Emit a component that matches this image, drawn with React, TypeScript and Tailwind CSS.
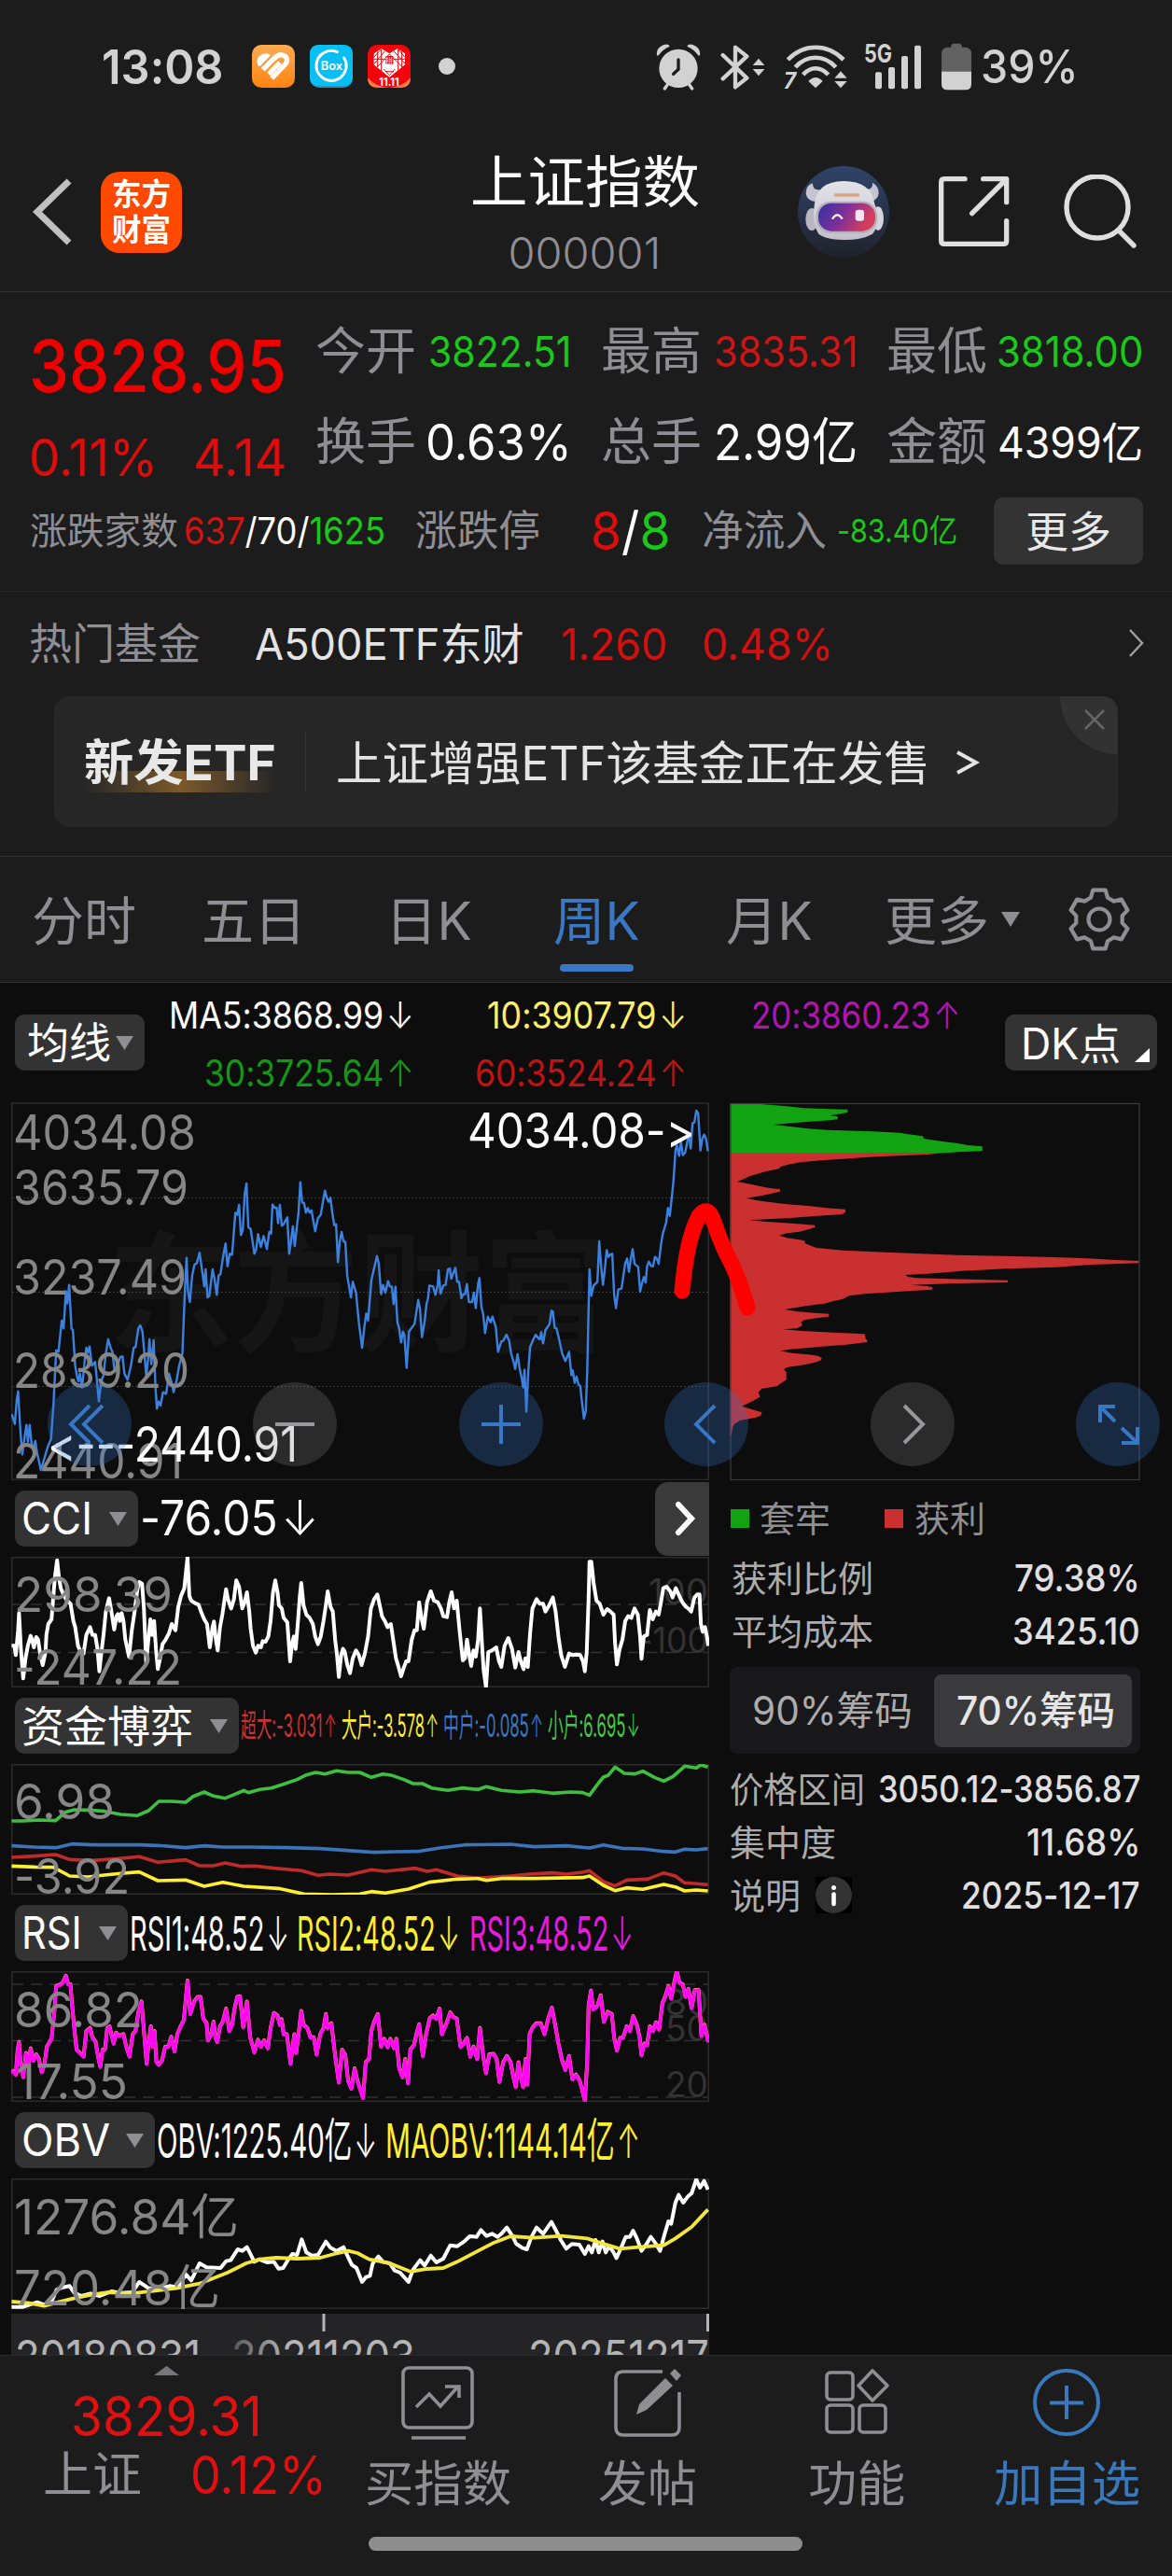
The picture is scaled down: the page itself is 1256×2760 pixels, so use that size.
import { useLayoutEffect, useRef, useState, type ReactNode } from "react";
import clsx from "clsx";

/* ---------- text that is squeezed or stretched to a given width ---------- */

interface FitProps {
  w: number;
  className?: string;
  children: ReactNode;
}

const Fit = ({ w, className, children }: FitProps) => {
  const ref = useRef<HTMLSpanElement>(null);
  const [scale, setScale] = useState(1);

  useLayoutEffect(() => {
    if (ref.current) setScale(w / ref.current.offsetWidth);
  }, [w]);

  return (
    <span className={clsx("flex shrink-0 leading-none whitespace-nowrap", className)} style={{ width: w }}>
      <span ref={ref} className="block shrink-0 origin-left" style={{ transform: `scaleX(${scale})` }}>
        {children}
      </span>
    </span>
  );
};

const Up = () => <span className="ml-[0.08em] font-light">↑</span>;
const Down = () => <span className="ml-[0.08em] font-light">↓</span>;

/* ---------- status bar ---------- */

const StatusBar = () => (
  <div className="flex h-[142px] items-center pl-[109px] text-[#d2d2d2]">
    <Fit w={131} className="text-[51px] font-semibold">13:08</Fit>
    <svg className="ml-[30px] h-[46px] w-[46px]" viewBox="0 0 138 138">
      <defs>
        <linearGradient id="orange" x1="0" y1="0" x2="0" y2="1">
          <stop offset="0" stopColor="#ffab52" />
          <stop offset="1" stopColor="#ff8412" />
        </linearGradient>
      </defs>
      <rect width="138" height="138" rx="30" fill="url(#orange)" />
      <path d="M19 66 Q10 36 36 29 Q52 26 60 33 L26 69 Z" fill="#fff" />
      <path d="M35 80 L74 41 Q92 25 108 38 Q118 50 106 64 L64 108 M54 94 L90 57" fill="none" stroke="#fff" strokeWidth="16" />
    </svg>
    <svg className="ml-4 h-[46px] w-[46px]" viewBox="0 0 138 138">
      <rect width="138" height="138" rx="30" fill="#2a8fbe" />
      <path d="M30 0H108Q138 0 138 30V108Q134 132 108 132H30Q4 132 0 108V30Q0 0 30 0Z" fill="#08bff4" />
      <path d="M88 23 A48 48 0 1 0 110 42" fill="none" stroke="#fff" strokeWidth="9" strokeLinecap="round" />
      <text x="35" y="80" textLength="70" lengthAdjust="spacingAndGlyphs" fontSize="38" fontWeight="600" fill="#fff">Box</text>
    </svg>
    <svg className="ml-4 h-[46px] w-[46px]" viewBox="0 0 138 138">
      <rect width="138" height="138" rx="30" fill="#f2040c" />
      <path d="M0 106 Q30 138 69 138 Q108 138 138 106 Q138 138 108 138 H30 Q0 138 0 106Z" fill="#ff7a45" />
      <path d="M70 104 L20 64 V28 L44 12 L70 28 L96 12 L120 28 V64 Z" fill="#fff" />
      <path
        d="M20 40 L44 14 M20 62 L56 20 M30 72 L70 30 M70 30 L112 72 M84 20 L120 60 M98 14 L120 40 M44 14 V84 M32 22 V72 M98 14 V82 M110 22 V72 M20 46 H56 M84 46 H120 M56 86 L84 86 M52 78 L70 98 L88 78"
        fill="none"
        stroke="#f2040c"
        strokeWidth="3"
      />
      <rect x="58" y="36" width="24" height="26" fill="#f2040c" />
      <text x="58" y="59" fontSize="24" fill="#fff">拼</text>
      <text x="37" y="131" textLength="64" lengthAdjust="spacingAndGlyphs" fontSize="34" fontWeight="700" fill="#fff">11.11</text>
    </svg>
    <span className="ml-[30px] h-[18px] w-[18px] rounded-full bg-[#d2d2d2]" />

    <svg className="ml-[215px] h-[51px] w-[48px]" viewBox="37 45 144 153" fill="#d2d2d2">
      <circle cx="109" cy="127" r="62" />
      <path d="M40 84Q36 62 62 51Q78 46 81 56Q58 66 46 84Q42 87 40 84Z" />
      <path d="M178 84Q182 62 156 51Q140 46 137 56Q160 66 172 84Q176 87 178 84Z" />
      <path d="M76 176L65 192M142 176L153 192" stroke="#d2d2d2" strokeWidth="10" strokeLinecap="round" />
      <path d="M109 99V130L93 145" fill="none" stroke="#1c1c1c" strokeWidth="10" strokeLinecap="round" />
    </svg>
    <svg className="ml-[21px] h-[51px] w-[49px]" viewBox="245 45 147 153" fill="#d2d2d2">
      <path d="M253 84L330 158L293 187V59L330 88L253 160" fill="none" stroke="#d2d2d2" strokeWidth="13" strokeLinecap="round" strokeLinejoin="round" />
      <path d="M368 95l19 22h-38zM349 129h38l-19 22z" />
    </svg>
    <svg className="ml-[18px] h-[51px] w-[70px]" viewBox="448 45 210 153" fill="#d2d2d2">
      <g fill="none" stroke="#d2d2d2" strokeWidth="14">
        <path d="M464 99C515 46 591 46 643 99" />
        <path d="M488 123C525 82 581 82 618 123" />
        <path d="M513 147C537 120 569 120 594 147" />
      </g>
      <path d="M530 168Q553 144 576 168L553 190z" />
      <text x="450" y="193" fontSize="72" fontWeight="700" fontStyle="italic" textLength="40" lengthAdjust="spacingAndGlyphs">7</text>
      <path d="M634 136l20 22h-40zM614 168h40l-20 22z" />
    </svg>
    <svg className="ml-[17px] h-[51px] w-[63px]" viewBox="708 45 189 153" fill="#d2d2d2">
      <text x="708" y="109" fontSize="80" fontWeight="700" textLength="90" lengthAdjust="spacingAndGlyphs">5G</text>
      <rect x="744" y="139" width="21" height="54" rx="6" />
      <rect x="786" y="123" width="21" height="70" rx="6" />
      <rect x="828" y="87" width="21" height="106" rx="6" />
      <rect x="870" y="53" width="21" height="140" rx="6" />
    </svg>
    <svg className="ml-[19px] h-[51px] w-[34px]" viewBox="954 43 102 153">
      <rect x="988" y="45" width="34" height="24" rx="9" fill="#626262" />
      <rect x="957" y="57" width="96" height="137" rx="20" fill="#626262" />
      <path d="M957 135H1053V174Q1053 194 1033 194H977Q957 194 957 174Z" fill="#d2d2d2" />
    </svg>
    <Fit w={105} className="ml-[9px] text-[50px] font-medium">39%</Fit>
  </div>
);

/* ---------- title bar ---------- */

const Robot = () => (
  <svg className="h-[98px] w-[98px]" viewBox="495 444 294 294">
    <defs>
      <linearGradient id="sky" x1="0" y1="0" x2="0" y2="1">
        <stop offset="0" stopColor="#304468" />
        <stop offset="1" stopColor="#1f222c" />
      </linearGradient>
      <linearGradient id="visor" x1="0" y1="0" x2="1" y2="0.3">
        <stop offset="0" stopColor="#2f32a4" />
        <stop offset="0.5" stopColor="#7c2f9a" />
        <stop offset="1" stopColor="#d63f5c" />
      </linearGradient>
      <linearGradient id="fur" x1="0" y1="0" x2="0" y2="1">
        <stop offset="0" stopColor="#e4e3ea" />
        <stop offset="1" stopColor="#c3bfca" />
      </linearGradient>
    </defs>
    <circle cx="642" cy="591" r="147" fill="url(#sky)" />
    <path d="M543 499Q521 505 521 532Q524 556 552 558L572 520Q541 524 543 499Z" fill="#c4c5d0" />
    <path d="M735 497Q755 508 755 532Q752 554 728 558L708 518Q738 522 735 497Z" fill="#c4c5d0" />
    <ellipse cx="540" cy="615" rx="20" ry="36" fill="#b9b7c2" />
    <ellipse cx="753" cy="612" rx="18" ry="38" fill="#d6d4dc" />
    <path d="M548 570Q556 492 642 492Q732 492 742 566Q768 622 735 662Q700 682 648 681Q588 682 562 662Q540 630 548 570Z" fill="url(#fur)" />
    <rect x="554" y="557" width="196" height="102" rx="46" fill="#b5b0be" />
    <rect x="561" y="563" width="183" height="90" rx="42" fill="url(#visor)" />
    <path d="M606 614Q622 588 638 614" fill="none" stroke="#fff" strokeWidth="7" />
    <rect x="680" y="584" width="28" height="36" rx="9" fill="#f1e6f2" />
    <path d="M616 537H688" stroke="#d7a585" strokeWidth="11" strokeLinecap="round" />
  </svg>
);

const TitleBar = () => (
  <div className="flex h-[171px] items-center border-b border-[#2f2f2f] pl-[34px]">
    <svg className="h-[72px] w-[44px]" viewBox="0 0 44 72" fill="none" stroke="#c0c0c0" strokeWidth="7">
      <path d="M40 3L6 36L40 69" />
    </svg>
    <div className="ml-[30px] flex h-[87px] w-[87px] flex-col items-center justify-center gap-[5px] rounded-[20px] bg-[#ff4800] text-white">
      <Fit w={63} className="text-[33px] font-bold">东方</Fit>
      <Fit w={63} className="text-[33px] font-bold">财富</Fit>
    </div>
    <div className="ml-[308px] flex w-[247px] flex-col items-center gap-[22px] pt-[4px]">
      <Fit w={246} className="text-[60px] text-white">上证指数</Fit>
      <Fit w={164} className="text-[47px] font-light text-[#8e8e93]">000001</Fit>
    </div>
    <div className="ml-[105px]">
      <Robot />
    </div>
    <svg className="ml-[53px] h-[76px] w-[76px]" viewBox="949 479 228 228" fill="none" stroke="#dedede" strokeWidth="16" strokeLinecap="round">
      <path d="M1033 487H967Q957 487 957 497V686Q957 696 967 696H1157Q1167 696 1167 686V622" />
      <path d="M1092 487H1167V562M1160 494L1056 598" strokeLinejoin="round" />
    </svg>
    <svg className="ml-[58px] h-[80px] w-[80px]" viewBox="0 0 80 80" fill="none" stroke="#dedede" strokeWidth="5.4" strokeLinecap="round">
      <circle cx="36" cy="35" r="33" />
      <path d="M59 60L75 76" />
    </svg>
  </div>
);

/* ---------- quote ---------- */

const quoteRows = [
  [
    { label: "今开", value: "3822.51", w: 154, cls: "text-[45px] text-[#19c819]" },
    { label: "最高", value: "3835.31", w: 154, cls: "text-[45px] text-[#cd1515]" },
    { label: "最低", value: "3818.00", w: 157, cls: "text-[45px] text-[#19c819]" },
  ],
  [
    { label: "换手", value: "0.63%", w: 157, cls: "text-[54px] text-white" },
    { label: "总手", value: "2.99亿", w: 154, cls: "text-[54px] text-white" },
    { label: "金额", value: "4399亿", w: 156, cls: "text-[46px] text-white" },
  ],
];

const Quote = () => (
  <div className="h-[321px] border-b border-[#262626]">
    <div className="flex h-[209px]">
      <div className="w-[338px] pt-[41px] pl-[31px]">
        <Fit w={276} className="text-[77px] font-medium text-[#ec0000]">3828.95</Fit>
        <div className="mt-[32px] flex justify-between pr-[30px] text-[#dc0d0d]">
          <Fit w={138} className="text-[55px]">0.11%</Fit>
          <Fit w={101} className="text-[55px]">4.14</Fit>
        </div>
      </div>
      <div className="flex flex-col pt-[15px]">
        {quoteRows.map((row, i) => (
          <div key={i} className="flex h-[97px] items-center gap-[31px]">
            {row.map((cell) => (
              <div key={cell.label} className="flex w-[275px] items-center justify-between">
                <Fit w={108} className="text-[54px] text-[#8e8e93]">{cell.label}</Fit>
                <Fit w={cell.w} className={cell.cls}>{cell.value}</Fit>
              </div>
            ))}
          </div>
        ))}
      </div>
    </div>
    <div className="flex h-[93px] items-center pl-[32px]">
      <Fit w={159} className="text-[40px] text-[#8e8e93]">涨跌家数</Fit>
      <Fit w={216} className="ml-[6px] text-[39px] text-white">
        <span className="text-[#cd1515]">637</span>/70/<span className="text-[#19c819]">1625</span>
      </Fit>
      <Fit w={134} className="ml-[32px] text-[45px] text-[#8e8e93]">涨跌停</Fit>
      <Fit w={86} className="ml-[54px] text-[56px] text-white">
        <span className="text-[#dc0d0d]">8</span>/<span className="text-[#19c819]">8</span>
      </Fit>
      <Fit w={134} className="ml-[33px] text-[45px] text-[#8e8e93]">净流入</Fit>
      <Fit w={129} className="ml-[11px] text-[34px] text-[#19c819]">-83.40亿</Fit>
      <button className="ml-[39px] flex h-[72px] w-[160px] items-center justify-center rounded-[10px] bg-[#333333]">
        <Fit w={92} className="text-[46px] text-[#e8e8e8]">更多</Fit>
      </button>
    </div>
  </div>
);

const HotFund = () => (
  <div className="h-[284px] border-b border-[#343434]">
    <div className="flex h-[110px] items-center pl-[31px]">
      <Fit w={184} className="text-[46px] text-[#8e8e93]">热门基金</Fit>
      <Fit w={289} className="ml-[58px] text-[47px] text-[#e4e4e4]">A500ETF东财</Fit>
      <Fit w={114} className="ml-[39px] text-[47px] text-[#d21010]">1.260</Fit>
      <Fit w={141} className="ml-[37px] text-[47px] text-[#d21010]">0.48%</Fit>
      <svg className="ml-[316px] h-[30px] w-[17px]" viewBox="0 0 17 30" fill="none" stroke="#a0a0a0" strokeWidth="2.4">
        <path d="M2 1L15 15L2 29" />
      </svg>
    </div>
    <div className="relative mt-[2px] ml-[58px] flex h-[140px] w-[1140px] items-center overflow-hidden rounded-[16px] bg-[#262626]">
      <div className="relative ml-[32px] flex h-[66px] items-center">
        <div className="absolute bottom-0 left-0 h-[23px] w-full bg-gradient-to-r from-[#262626] via-[#7d5a28] to-[#262626]" />
        <Fit w={206} className="relative top-[2px] text-[52px] font-bold text-[#e8e8e8]">新发ETF</Fit>
      </div>
      <div className="ml-[31px] h-[62px] w-px bg-[#353535]" />
      <Fit w={637} className="mt-[3px] ml-[32px] text-[50px] text-[#e4e4e4]">上证增强ETF该基金正在发售</Fit>
      <svg className="mt-[2px] ml-[27px] h-[26px] w-[26px]" viewBox="0 0 26 26" fill="none" stroke="#e4e4e4" strokeWidth="4">
        <path d="M2 2L22 13L2 24" />
      </svg>
      <div className="absolute top-0 right-0 flex h-[62px] w-[62px] items-center justify-center rounded-bl-full bg-[#323232] pb-[12px] pl-[12px]">
        <svg className="h-[22px] w-[22px]" viewBox="0 0 22 22" stroke="#666" strokeWidth="2.6">
          <path d="M1 1L21 21M21 1L1 21" />
        </svg>
      </div>
    </div>
  </div>
);

/* ---------- period tabs ---------- */

const tabs = [
  { name: "分时", w: 112, cls: "ml-[34px]" },
  { name: "五日", w: 112, cls: "ml-[70px]" },
  { name: "日K", w: 93, cls: "ml-[85px]" },
  { name: "周K", w: 93, cls: "ml-[87px]", active: true },
  { name: "月K", w: 93, cls: "ml-[92px]" },
  { name: "更多", w: 112, cls: "ml-[77px]" },
];

// Six-tooth outline around (36, 36)
const gearPoints = Array.from({ length: 6 }, (_, i) => i * 60 - 90)
  .flatMap((a) => [
    [a - 21, 25],
    [a - 12, 32],
    [a + 12, 32],
    [a + 21, 25],
  ])
  .map(([deg, r]) => {
    const t = (deg * Math.PI) / 180;
    return `${(36 + r * Math.cos(t)).toFixed(1)},${(36 + r * Math.sin(t)).toFixed(1)}`;
  })
  .join(" ");

const Tabs = () => (
  <div className="flex h-[135px] items-center border-b border-[#333333]">
    {tabs.map((t) => (
      <div key={t.name} className={clsx("relative flex h-full items-center pt-[4px]", t.cls)}>
        <Fit w={t.w} className={clsx("text-[56px]", t.active ? "text-[#3a78c3]" : "text-[#8e8e93]")}>
          {t.name}
        </Fit>
        {t.active && <span className="absolute bottom-[11px] left-[7px] h-[8px] w-[79px] rounded-full bg-[#3a78c3]" />}
      </div>
    ))}
    <svg className="ml-[13px] h-[16px] w-[20px]" viewBox="0 0 20 16" fill="#8e8e93">
      <path d="M0 0H20L10 16Z" />
    </svg>
    <svg className="ml-[49px] h-[72px] w-[72px]" viewBox="0 0 72 72" fill="none" stroke="#8e8e93" strokeWidth="4.2" strokeLinejoin="round">
      <polygon points={gearPoints} />
      <circle cx="36" cy="36" r="11.5" />
    </svg>
  </div>
);

/* ---------- moving averages ---------- */

const Caret = ({ className }: { className?: string }) => (
  <svg className={clsx("h-[15px] w-[19px] shrink-0", className)} viewBox="0 0 19 15" fill="#8e8e93">
    <path d="M0 0H19L9.5 15Z" />
  </svg>
);

const Averages = () => (
  <div className="flex h-[128px]">
    <button className="mt-[34px] ml-[16px] flex h-[60px] w-[139px] items-center rounded-[10px] bg-[#333333] pl-[13px]">
      <Fit w={90} className="text-[45px] text-white">均线</Fit>
      <Caret className="ml-[5px]" />
    </button>
    <div className="flex w-[922px] flex-col pt-[3px] text-[39px]">
      <div className="flex h-[62px] items-center">
        <Fit w={263} className="ml-[26px] text-white">MA5:3868.99<Down /></Fit>
        <Fit w={214} className="ml-[78px] text-[#fff06b]">10:3907.79<Down /></Fit>
        <Fit w={224} className="ml-[69px] text-[#b114b1]">20:3860.23<Up /></Fit>
      </div>
      <div className="flex h-[62px] items-center">
        <Fit w={225} className="ml-[64px] text-[#159615]">30:3725.64<Up /></Fit>
        <Fit w={227} className="ml-[65px] text-[#c01414]">60:3524.24<Up /></Fit>
      </div>
    </div>
    <button className="mt-[34px] flex h-[60px] w-[163px] items-end rounded-[10px] bg-[#333333]">
      <Fit w={107} className="mb-[6px] ml-[17px] text-[46px] text-white">DK点</Fit>
      <svg className="mb-[9px] ml-[15px] h-[15px] w-[16px]" viewBox="0 0 16 15" fill="#fff">
        <path d="M16 0V15H0Z" />
      </svg>
    </button>
  </div>
);

/* ---------- charts ---------- */

const PRICE =
  "25,1035 32,1067 36,990 39,962 44,1090 48,1165 52,1120 57,1070 60,1125 64,1070 68,1130 72,1150 76,1122 80,1160 88,1215 94,1185 103,1140 110,1115 115,1010 121,830 126,835 133,735 137,760 142,640 145,680 149,620 154,760 157,765 162,880 166,915 169,930 172,905 177,950 182,870 186,822 189,838 193,818 198,880 205,868 209,930 213,995 218,930 223,910 228,840 233,795 238,820 242,835 247,900 253,880 259,852 264,850 268,905 275,925 282,880 288,822 292,820 298,760 302,750 307,770 311,840 315,912 319,860 322,795 326,875 331,798 335,950 338,1018 342,995 346,1008 351,965 358,970 364,905 369,930 374,965 380,930 386,880 393,840 398,650 402,533 405,640 409,675 414,590 419,555 424,550 430,517 436,580 440,625 443,570 447,660 451,655 458,570 462,600 467,652 471,590 475,585 480,535 486,487 490,560 495,520 500,523 507,388 511,395 515,363 519,460 523,445 527,330 531,294 535,435 540,440 548,520 552,505 556,457 562,498 568,463 575,505 580,450 584,455 587,362 592,372 596,372 599,422 603,363 607,430 611,425 619,403 623,520 627,480 631,432 635,495 639,440 643,390 647,290 651,355 655,357 659,388 663,373 667,388 671,380 679,448 685,405 691,395 696,350 700,317 704,340 708,353 712,340 716,390 720,428 724,425 728,547 732,480 736,450 740,480 744,482 748,590 756,660 760,610 767,645 773,740 780,822 785,755 789,712 793,735 800,605 807,560 812,528 816,550 821,650 825,620 830,645 836,608 840,625 844,625 848,682 852,626 856,740 860,760 864,805 868,770 871,780 876,887 881,770 886,760 893,745 901,668 905,700 909,788 915,735 919,680 922,665 925,622 933,625 938,652 943,620 945,573 949,648 955,622 960,620 965,570 969,567 972,600 981,565 985,610 989,610 994,663 998,650 1002,650 1006,617 1010,675 1017,675 1021,645 1025,695 1030,615 1033,598 1037,690 1041,715 1045,775 1051,722 1057,740 1061,722 1068,755 1073,835 1080,802 1084,800 1091,780 1097,800 1101,840 1106,865 1110,890 1115,843 1119,885 1124,920 1127,950 1130,893 1134,1028 1138,900 1142,820 1149,795 1154,780 1160,792 1163,795 1166,772 1170,808 1175,765 1180,755 1184,745 1188,703 1191,705 1195,758 1199,760 1206,805 1211,840 1218,865 1226,835 1231,910 1234,895 1238,935 1242,915 1246,940 1250,945 1254,1000 1258,1050 1262,1025 1265,900 1268,700 1270,570 1274,655 1279,622 1287,610 1291,480 1295,560 1299,620 1303,570 1307,508 1311,530 1315,522 1319,520 1323,650 1327,695 1332,635 1339,632 1343,590 1347,550 1351,535 1355,578 1359,535 1363,505 1367,552 1371,558 1375,562 1379,642 1383,615 1387,595 1391,612 1394,560 1398,545 1403,560 1407,560 1411,530 1415,535 1419,552 1424,490 1428,455 1435,420 1439,373 1443,398 1450,300 1453,240 1455,190 1458,170 1463,205 1467,160 1471,203 1476,195 1480,165 1484,135 1488,182 1492,100 1496,98 1500,60 1504,68 1509,188 1513,150 1517,137 1521,150 1525,190";

const CCI =
  "25,550 31,550 34,580 39,500 41,445 45,560 50,655 55,590 60,550 66,518 69,530 73,555 78,522 82,530 87,580 92,612 98,570 100,515 104,480 111,465 116,370 119,320 123,275 127,330 131,365 138,390 145,405 152,415 158,470 162,490 168,550 174,570 180,575 186,515 194,490 199,515 205,515 210,560 214,632 219,565 223,515 228,440 235,397 240,440 246,498 251,455 254,448 258,470 262,445 266,470 270,530 278,585 284,500 290,440 296,370 300,345 306,350 310,430 315,605 319,540 324,465 328,515 332,470 336,560 340,625 345,590 350,545 357,530 364,510 370,480 378,500 384,425 390,390 397,365 404,265 408,390 412,405 420,413 428,418 433,440 440,465 446,480 452,555 458,490 461,472 465,530 469,565 474,490 479,450 487,368 491,400 498,430 504,400 509,340 515,360 522,430 527,410 532,378 537,440 540,495 545,550 551,572 556,550 562,555 566,535 572,537 578,520 583,470 588,380 593,340 598,380 601,420 607,430 611,460 619,475 625,600 629,545 633,520 637,560 642,470 646,390 649,348 654,420 660,450 667,460 674,480 679,520 685,545 691,520 697,470 702,420 706,375 712,425 717,440 722,530 726,580 730,650 735,580 739,560 743,570 748,610 754,638 760,590 767,565 773,580 779,612 786,575 793,520 799,430 806,400 813,385 818,420 823,455 829,470 835,490 842,480 849,550 853,590 859,620 864,648 870,620 875,600 880,600 887,530 893,500 898,500 903,410 908,460 913,495 920,410 928,375 935,405 943,410 950,430 955,455 963,458 968,410 973,378 978,430 984,405 990,500 997,597 1002,590 1006,530 1011,580 1015,615 1020,565 1025,585 1030,530 1034,430 1039,560 1042,630 1047,683 1052,570 1060,565 1069,555 1075,600 1080,618 1087,550 1095,525 1103,560 1110,620 1117,570 1122,600 1128,625 1132,590 1137,618 1142,510 1147,430 1156,400 1163,415 1170,415 1175,440 1183,420 1191,395 1197,440 1203,520 1209,580 1217,618 1226,575 1234,580 1243,578 1250,580 1256,600 1260,632 1264,570 1268,400 1270,280 1274,280 1279,350 1285,405 1292,415 1300,450 1308,432 1315,440 1322,450 1325,540 1329,610 1335,560 1341,530 1347,470 1353,455 1360,460 1367,430 1374,450 1379,520 1382,592 1387,520 1394,515 1400,435 1406,465 1413,440 1419,450 1424,410 1429,365 1436,360 1444,375 1449,395 1456,365 1462,385 1470,410 1478,425 1483,430 1489,440 1496,395 1502,385 1507,385 1510,480 1514,505 1519,490 1523,520 1526,550";

const FLOW_SMALL =
  "25,1113 50,1113 85,1110 120,1112 140,1085 160,1077 190,1078 225,1082 260,1092 295,1096 320,1080 342,1050 370,1050 400,1053 415,1035 440,1020 460,1033 485,1040 505,1028 525,1015 535,1022 560,1012 585,1007 610,995 640,980 660,965 680,957 700,962 725,952 750,957 775,957 800,973 825,962 845,967 870,980 890,993 910,993 930,1007 965,1015 995,1007 1030,1012 1048,1003 1080,1015 1120,1020 1150,1016 1190,1024 1230,1020 1255,1022 1270,1030 1290,990 1300,972 1310,967 1325,940 1345,960 1368,962 1385,953 1410,973 1430,985 1450,970 1475,937 1500,943 1510,933 1525,940";
const FLOW_MID =
  "25,1193 75,1197 120,1199 155,1187 200,1190 300,1190 340,1192 400,1199 440,1193 480,1197 540,1197 620,1199 690,1202 740,1207 805,1214 850,1212 900,1211 950,1199 1000,1190 1100,1188 1150,1196 1220,1193 1270,1200 1300,1190 1340,1201 1385,1203 1430,1211 1455,1213 1475,1204 1500,1206 1525,1202";
const FLOW_HUGE =
  "25,1230 75,1226 120,1221 150,1237 200,1240 250,1235 300,1228 340,1246 400,1238 430,1257 460,1257 485,1248 520,1259 550,1258 590,1265 650,1273 685,1288 710,1284 750,1287 800,1270 830,1275 895,1265 920,1275 940,1270 985,1290 1030,1297 1100,1290 1140,1284 1190,1280 1220,1284 1255,1278 1270,1273 1300,1308 1325,1322 1350,1303 1395,1300 1430,1280 1455,1290 1475,1312 1500,1315 1525,1318";
const FLOW_BIG =
  "25,1258 75,1261 115,1262 150,1290 190,1293 220,1288 260,1282 300,1277 340,1305 400,1303 440,1323 480,1310 525,1323 600,1330 655,1348 715,1350 775,1348 800,1340 830,1345 880,1332 925,1310 985,1300 1030,1298 1048,1304 1080,1298 1150,1298 1255,1295 1270,1290 1300,1320 1325,1337 1350,1328 1385,1333 1430,1317 1455,1325 1475,1338 1500,1335 1525,1338";

const RSI =
  "25,565 34,580 38,500 41,475 44,540 50,588 56,510 62,540 66,495 72,535 78,515 84,530 90,572 96,545 101,490 111,465 117,380 121,295 128,292 135,285 142,262 147,290 152,290 155,350 160,430 165,500 172,510 180,522 186,440 194,430 199,460 206,475 211,520 216,555 221,500 226,500 231,430 236,425 240,450 245,480 250,445 256,455 266,450 272,490 279,522 286,450 292,440 298,380 305,345 309,420 316,545 320,480 325,425 329,490 333,440 337,540 342,548 349,535 356,490 363,490 369,458 376,505 382,450 389,425 396,405 400,340 404,278 410,385 418,345 426,330 432,330 438,400 445,415 448,470 454,455 460,410 464,460 468,475 474,425 480,410 487,368 494,440 500,420 505,370 511,330 517,328 524,428 532,345 539,460 548,508 556,468 562,490 569,470 577,495 583,430 590,382 598,390 603,420 607,402 611,450 618,450 626,545 634,450 638,510 644,440 649,375 654,420 662,430 669,460 676,460 682,515 690,450 697,430 702,385 706,430 714,415 722,520 730,605 737,500 744,518 750,600 757,625 764,560 770,600 782,655 788,540 795,530 800,440 806,410 814,385 821,490 828,465 835,492 841,465 849,495 854,465 860,560 867,588 873,530 879,608 884,500 892,485 897,450 903,418 911,520 918,450 926,398 933,390 940,400 947,368 952,450 962,415 970,380 977,395 984,400 992,490 999,480 1006,462 1013,522 1020,490 1028,530 1034,430 1041,520 1047,575 1054,515 1063,513 1070,530 1076,603 1084,540 1092,520 1100,540 1105,580 1111,620 1117,540 1122,590 1127,620 1132,530 1136,612 1141,450 1147,430 1155,415 1165,415 1173,450 1181,400 1189,365 1196,420 1203,480 1211,535 1218,565 1226,520 1233,595 1241,580 1249,600 1256,640 1260,663 1265,540 1268,360 1273,310 1278,370 1287,360 1294,325 1301,410 1309,378 1318,385 1323,460 1329,502 1336,462 1342,462 1350,425 1357,440 1364,392 1372,420 1378,460 1382,518 1388,480 1394,485 1400,425 1407,440 1413,412 1420,435 1427,350 1433,330 1440,295 1446,335 1453,280 1458,248 1464,285 1471,290 1477,330 1483,305 1490,365 1497,308 1505,308 1511,455 1518,420 1526,475";

const OBV =
  "25,1325 50,1325 80,1310 95,1318 112,1305 122,1270 135,1262 150,1258 160,1280 175,1290 195,1282 215,1290 240,1275 260,1280 285,1278 300,1245 320,1265 345,1265 365,1258 385,1262 400,1220 412,1240 430,1185 445,1198 475,1200 487,1178 497,1175 512,1140 522,1145 532,1133 548,1180 558,1172 575,1182 590,1180 600,1202 610,1200 620,1175 630,1155 640,1158 650,1108 660,1150 672,1160 685,1158 702,1115 712,1135 725,1145 740,1133 750,1165 758,1190 768,1200 780,1245 788,1230 797,1225 803,1185 815,1163 825,1180 840,1185 850,1208 862,1215 880,1245 890,1205 905,1175 915,1192 928,1160 940,1182 955,1170 970,1127 985,1130 1000,1115 1012,1098 1027,1100 1036,1078 1048,1097 1060,1090 1072,1100 1080,1090 1092,1070 1105,1100 1112,1122 1125,1135 1135,1140 1145,1100 1156,1070 1170,1090 1188,1052 1198,1080 1208,1110 1220,1138 1232,1123 1248,1125 1260,1155 1268,1130 1275,1150 1283,1110 1290,1150 1298,1115 1305,1150 1312,1130 1320,1145 1328,1168 1338,1135 1348,1100 1357,1100 1364,1080 1372,1105 1382,1145 1392,1125 1402,1100 1412,1120 1422,1145 1432,1090 1440,1050 1446,1058 1455,990 1462,965 1472,990 1482,970 1490,960 1500,915 1508,942 1517,920 1525,948";
const MAOBV =
  "25,1308 60,1312 95,1322 125,1310 160,1297 200,1285 235,1278 280,1282 330,1274 380,1265 430,1250 490,1215 530,1185 560,1172 595,1167 640,1170 690,1167 720,1155 750,1145 770,1152 795,1172 840,1185 885,1212 920,1203 955,1200 985,1180 1030,1145 1065,1118 1100,1098 1150,1103 1210,1097 1265,1105 1300,1122 1335,1138 1375,1133 1430,1127 1455,1105 1490,1068 1525,1012";

const CHIPS_ABOVE =
  "67,37 140,37 195,41 250,46 305,52 385,55 445,56 445,66 410,72 388,76 413,79 413,87 390,91 320,95 250,101 207,105 240,109 320,118 380,122 530,127 615,131 635,135 687,142 690,150 735,157 800,165 830,171 878,175 878,190 815,192 755,196 67,196";
const CHIPS_BELOW =
  "67,195 755,195 705,201 555,207 490,211 430,215 370,219 300,225 260,232 230,240 225,246 180,256 130,271 105,282 90,288 110,292 160,302 190,308 228,313 228,320 195,328 165,334 120,341 150,348 200,355 250,361 320,366 375,373 438,377 438,386 428,393 340,399 270,404 200,408 127,412 175,416 230,420 285,424 340,428 340,435 310,444 290,449 250,454 225,461 250,469 290,475 307,478 308,487 345,501 430,509 515,513 605,517 718,521 795,524 980,528 1110,531 1215,535 1290,539 1382,543 1382,550 1230,555 1155,560 1115,563 955,568 870,572 810,575 762,580 700,584 630,588 640,594 665,598 835,602 960,605 960,612 800,615 650,620 700,624 718,628 718,635 640,640 560,645 500,649 450,655 430,665 400,672 370,680 310,688 242,699 280,705 320,709 385,713 385,722 345,727 305,733 295,740 298,745 298,752 280,760 238,763 300,768 400,773 500,778 503,793 508,797 508,804 440,812 380,817 320,822 260,827 228,832 265,839 320,844 350,848 362,855 360,862 345,868 310,876 250,885 240,892 248,900 248,925 232,935 218,946 170,953 158,965 164,980 140,993 105,1010 145,1022 170,1030 165,1040 150,1046 100,1055 80,1068 75,1080 72,1100 67,1110";

interface SeriesProps {
  points: string;
  color: string;
  dy: number;
  width?: number;
}

const Series = ({ points, color, dy, width = 2.5 }: SeriesProps) => (
  <g transform={`translate(-12 ${-dy}) scale(.49745 .33333)`}>
    <polyline points={points} fill="none" stroke={color} strokeWidth={width} strokeLinejoin="round" vectorEffect="non-scaling-stroke" />
  </g>
);

interface LabelProps {
  x: number;
  y: number;
  w: number;
  size?: number;
  fill?: string;
  children: string;
}

// y is the middle of the digits
const Label = ({ x, y, w, size = 52, fill = "#868686", children }: LabelProps) => (
  <text x={x} y={y + size * 0.364} fontSize={size} fill={fill} textLength={w} lengthAdjust="spacingAndGlyphs">
    {children}
  </text>
);

const Dash = ({ y }: { y: number }) => (
  <path d={`M1 ${y}H747`} stroke="#303030" strokeWidth="1.6" strokeDasharray="12 8" />
);

const PriceChart = () => (
  <svg className="block h-[405px] w-[748px]" viewBox="0 0 748 405">
    <rect x="0.75" y="1" width="746.5" height="403.5" fill="none" stroke="#2a2a2a" strokeWidth="1.6" />
    <text x="104" y="256" fontSize="140" fontWeight="700" fill="#151515" textLength="536" lengthAdjust="spacingAndGlyphs">东方财富</text>
    <path d="M1 102.5H747M1 203.5H747M1 304.5H747" stroke="#3a3a3a" strokeWidth="1.2" strokeDasharray="2 2" />
    <Series points={PRICE} color="#3b82e0" dy={11} width={2.4} />
    <Label x={2} y={32} w={196}>4034.08</Label>
    <Label x={2} y={91} w={188}>3635.79</Label>
    <Label x={2} y={187} w={186}>3237.49</Label>
    <Label x={2} y={287} w={189}>2839.20</Label>
    <Label x={2} y={384} w={182}>2440.91</Label>
    <Label x={489} y={30} w={244} fill="#fff">4034.08-&gt;</Label>
    <Label x={39} y={366} w={268} fill="#fff">&lt;---2440.91</Label>
  </svg>
);

const Frame = ({ children }: { children: ReactNode }) => (
  <svg className="block h-[140px] w-[748px]" viewBox="0 0 748 140">
    <rect x="0.75" y="0.75" width="746.5" height="138.5" fill="none" stroke="#2a2a2a" strokeWidth="1.6" />
    {children}
  </svg>
);

interface PickerProps {
  name: string;
  w: number;
  className: string;
  size?: string;
}

const Picker = ({ name, w, className, size = "text-[48px]" }: PickerProps) => (
  <button className={clsx("ml-[4px] flex h-[60px] shrink-0 items-center justify-between rounded-[10px] bg-[#333333] pr-[12px] pl-[7px]", className)}>
    <Fit w={w} className={clsx(size, "text-white")}>{name}</Fit>
    <Caret />
  </button>
);

const Indicators = () => (
  <div className="w-[748px]">
    <div className="flex h-[82px] items-center">
      <Picker name="CCI" w={76} className="w-[132px]" />
      <Fit w={191} className="ml-[2px] text-[52px] text-white">-76.05<Down /></Fit>
      <button className="ml-auto flex h-[79px] w-[58px] items-center justify-center rounded-l-[14px] bg-[#3a3a3a] pl-[7px]">
        <svg className="h-[38px] w-[24px]" viewBox="0 0 24 38" fill="none" stroke="#fff" strokeWidth="6" strokeLinecap="round">
          <path d="M4 4L18 19L4 34" />
        </svg>
      </button>
    </div>
    <Frame>
      <Dash y={51} />
      <Dash y={102.5} />
      <Label x={683} y={37} w={64} size={38} fill="#333">100</Label>
      <Label x={671} y={89} w={76} size={38} fill="#333">-100</Label>
      <Series points={CCI} color="#ffffff" dy={88} width={4} />
      <Label x={3} y={40} w={170}>298.39</Label>
      <Label x={3} y={118} w={180}>-247.22</Label>
    </Frame>

    <div className="flex h-[82px] items-center">
      <Picker name="资金博弈" w={184} className="w-[240px]" size="text-[46px]" />
      <div className="flex text-[34px]">
        <Fit w={103} className="ml-[2px] text-[#c83232]">超大:-3.031<Up /></Fit>
        <Fit w={104} className="ml-[5px] text-[#ffee32]">大户:-3.578<Up /></Fit>
        <Fit w={107} className="ml-[5px] text-[#3f78c0]">中户:-0.085<Up /></Fit>
        <Fit w={99} className="ml-[5px] text-[#46c846]">小户:6.695<Down /></Fit>
      </div>
    </div>
    <Frame>
      <Series points={FLOW_SMALL} color="#3fbf3f" dy={310} width={3.6} />
      <Series points={FLOW_MID} color="#3b74b8" dy={310} width={3.6} />
      <Series points={FLOW_HUGE} color="#c02a2a" dy={310} width={3.6} />
      <Series points={FLOW_BIG} color="#ffee32" dy={310} width={3.6} />
      <Label x={3} y={40} w={108}>6.98</Label>
      <Label x={3} y={120} w={124}>-3.92</Label>
    </Frame>

    <div className="flex h-[82px] items-center">
      <Picker name="RSI" w={65} className="w-[121px]" />
      <div className="flex text-[51px]">
        <Fit w={171} className="ml-[2px] text-white">RSI1:48.52<Down /></Fit>
        <Fit w={175} className="ml-[8px] text-[#ffee32]">RSI2:48.52<Down /></Fit>
        <Fit w={176} className="ml-[10px] text-[#e81ae0]">RSI3:48.52<Down /></Fit>
      </div>
    </div>
    <Frame>
      <Dash y={14} />
      <Dash y={74.5} />
      <Dash y={135} />
      <Label x={701} y={33.5} w={46} size={38} fill="#333">80</Label>
      <Label x={701} y={60.7} w={46} size={38} fill="#333">50</Label>
      <Label x={701} y={121.6} w={46} size={38} fill="#333">20</Label>
      <Series points={RSI} color="#ff9a6a" dy={82.6} width={4} />
      <Series points={RSI} color="#ff0af0" dy={82} width={3.6} />
      <Label x={3} y={41} w={138}>86.82</Label>
      <Label x={5} y={118} w={120}>17.55</Label>
    </Frame>

    <div className="flex h-[82px] items-center">
      <Picker name="OBV" w={95} className="w-[150px]" />
      <div className="flex text-[51px]">
        <Fit w={236} className="ml-[2px] text-white">OBV:1225.40亿<Down /></Fit>
        <Fit w={273} className="ml-[9px] text-[#ffee32]">MAOBV:1144.14亿<Up /></Fit>
      </div>
    </div>
    <Frame>
      <Series points={OBV} color="#ffffff" dy={304} width={4} />
      <Series points={MAOBV} color="#f5e63c" dy={304} width={3.8} />
      <Label x={3} y={41} w={241}>1276.84亿</Label>
      <Label x={3} y={117} w={221}>720.48亿</Label>
    </Frame>
    <svg className="mt-[5px] block h-[44px] w-[748px]" viewBox="0 0 748 44">
      <defs>
        <linearGradient id="fade">
          <stop offset="0" stopColor="#555" />
          <stop offset="0.3" stopColor="#b4b4b4" />
        </linearGradient>
      </defs>
      <rect width="748" height="44" fill="#242426" />
      <path d="M335 0V19M746.5 0V19" stroke="#b4b4b4" strokeWidth="3" />
      <Label x={4} y={46} w={199} size={48} fill="#b4b4b4">20180831</Label>
      <Label x={236} y={46} w={197} size={48} fill="url(#fade)">20211203</Label>
      <Label x={554} y={46} w={194} size={48} fill="#b4b4b4">20251217</Label>
    </svg>
  </div>
);

/* ---------- chip distribution ---------- */

interface ChipRowProps {
  label: ReactNode;
  value: string;
  w: number;
}

const ChipRow = ({ label, value, w }: ChipRowProps) => (
  <div className="flex h-[57px] items-center justify-between">
    {label}
    <Fit w={w} className="text-[40px] font-medium text-[#e0e0e0]">{value}</Fit>
  </div>
);

const ChipPanel = () => (
  <div className="ml-[22px] w-[440px]">
    <svg className="block h-[405px] w-[440px]" viewBox="0 0 440 405">
      <g transform="translate(-22 -11) scale(.33333)">
        <polygon points={CHIPS_ABOVE} fill="#12a312" />
        <polygon points={CHIPS_BELOW} fill="#cb3030" />
      </g>
      <rect x="1" y="1.5" width="438" height="403" fill="none" stroke="#3c3c3c" strokeWidth="1.2" />
    </svg>
    <div className="flex h-[82px] items-center pl-px">
      <span className="h-[20px] w-[20px] bg-[#12a312]" />
      <Fit w={76} className="ml-[11px] text-[38px] text-[#8e8e93]">套牢</Fit>
      <span className="ml-[58px] h-[20px] w-[20px] bg-[#cb3030]" />
      <Fit w={76} className="ml-[12px] text-[38px] text-[#8e8e93]">获利</Fit>
    </div>
    <div className="-mt-[6px] text-[38px] text-[#acacac]">
      <ChipRow label={<Fit w={152} className="pl-[2px]">获利比例</Fit>} value="79.38%" w={135} />
      <ChipRow label={<Fit w={152} className="pl-[2px]">平均成本</Fit>} value="3425.10" w={137} />
      <div className="mt-[10px] mb-[9px] flex h-[93px] items-center rounded-[8px] bg-[#18181a] pl-[24px]">
        <Fit w={172} className="text-[42px]">90%筹码</Fit>
        <div className="ml-[23px] flex h-[78px] w-[212px] items-center rounded-[8px] bg-[#3a3a3c] pl-[24px]">
          <Fit w={170} className="text-[42px] font-medium text-[#e6e6e6]">70%筹码</Fit>
        </div>
      </div>
      <ChipRow label={<Fit w={145}>价格区间</Fit>} value="3050.12-3856.87" w={281} />
      <ChipRow label={<Fit w={114}>集中度</Fit>} value="11.68%" w={122} />
      <ChipRow
        label={
          <div className="flex flex-1 items-center">
            <Fit w={76}>说明</Fit>
            <span className="ml-[16px] h-[39px] w-[39px] bg-black">
              <svg viewBox="0 0 39 39">
                <circle cx="19.5" cy="19.5" r="19.5" fill="#333" />
                <circle cx="19.5" cy="11.5" r="2.5" fill="#fff" />
                <path d="M19.5 18.5V29" stroke="#fff" strokeWidth="4.6" strokeLinecap="round" />
              </svg>
            </span>
          </div>
        }
        value="2025-12-17"
        w={192}
      />
    </div>
  </div>
);

/* ---------- round buttons and the marker over the chart ---------- */

const roundButtons = [
  { d: "M45 25L25 45L45 65M59 25L39 45L59 65", blue: true },
  { d: "M24 45H66", blue: false },
  { d: "M24 45H66M45 24V66", blue: true },
  { d: "M54 25L34 45L54 65", blue: true },
  { d: "M36 25L56 45L36 65", blue: false },
  { d: "M42 26H26V43M26 26L42 42M49 65H66V48M66 65L49 49", blue: true },
];

const ChartControls = () => (
  <div className="absolute top-[428px] left-[51px] flex w-[1192px] justify-between">
    {roundButtons.map(({ d, blue }) => (
      <button key={d} className={clsx("h-[90px] w-[90px] rounded-full", blue ? "bg-[#3475ca]/28" : "bg-[#828285]/26")}>
        <svg viewBox="0 0 90 90" fill="none" stroke={blue ? "#3777c3" : "#98989c"} strokeWidth="4">
          <path d={d} />
        </svg>
      </button>
    ))}
  </div>
);

const Marker = () => (
  <svg className="absolute top-[225px] left-[715px] h-[150px] w-[110px]" viewBox="715 1278 110 150" fill="none" stroke="#ff0000" strokeWidth="17" strokeLinecap="round" strokeLinejoin="round">
    <path d="M731 1383C734 1352 738 1324 749 1303Q757 1292 763 1304C769 1318 770 1328 782 1350C791 1367 796 1384 801 1401" />
  </svg>
);

/* ---------- bottom bar ---------- */

const actions = [
  {
    name: "买指数",
    w: 157,
    icon: (
      <>
        <rect x="3" y="2" width="74" height="64" rx="6" />
        <path d="M12 77H70M17 44L31 30L43 43L61 23M48 22H63V34" />
      </>
    ),
  },
  {
    name: "发帖",
    w: 106,
    icon: (
      <>
        <path d="M56 6H14Q6 6 6 14V66Q6 74 14 74H66Q74 74 74 66V28" />
        <path d="M28 52L31 41L59 13L67 21L39 47Z" fill="#8e8e93" stroke="none" />
        <path d="M64 8L69 3L76 10L71 16Z" fill="#8e8e93" stroke="none" />
      </>
    ),
  },
  {
    name: "功能",
    w: 104,
    icon: (
      <>
        <rect x="8" y="7" width="28" height="29" rx="4" />
        <rect x="8" y="42" width="28" height="29" rx="4" />
        <rect x="43" y="42" width="28" height="29" rx="4" />
        <path d="M57 5L73 21L57 37L42 21Z" strokeLinejoin="round" />
      </>
    ),
  },
];

const BottomBar = () => (
  <div className="h-[237px] border-t border-[#2a2a2a] bg-[#1c1c1c]">
    <div className="flex h-[194px]">
      <div className="flex w-[357px] flex-col items-center pt-[11px]">
        <svg className="h-[10px] w-[27px]" viewBox="0 0 27 10" fill="#77777b">
          <path d="M13.5 0L27 10H0Z" />
        </svg>
        <Fit w={205} className="mt-[14px] text-[59px] text-[#e01010]">3829.31</Fit>
        <div className="mt-[6px] flex w-full items-center justify-between pr-[7px] pl-[46px]">
          <Fit w={106} className="text-[52px] text-[#8e8e93]">上证</Fit>
          <Fit w={146} className="text-[56px] text-[#e01010]">0.12%</Fit>
        </div>
      </div>
      {actions.map((a) => (
        <div key={a.name} className="flex w-[224.5px] flex-col items-center pt-[11px]">
          <svg className="h-[80px] w-[80px]" viewBox="0 0 80 80" fill="none" stroke="#8e8e93" strokeWidth="3.6">
            {a.icon}
          </svg>
          <Fit w={a.w} className="mt-[21px] text-[52px] text-[#8e8e93]">{a.name}</Fit>
        </div>
      ))}
      <div className="flex w-[225px] flex-col items-center pt-[11px]">
        <svg className="h-[80px] w-[80px]" viewBox="0 0 80 80" fill="none" stroke="#3a78bd" strokeWidth="4">
          <circle cx="40" cy="39" r="34" />
          <path d="M22 39.500H58M40 21V57" />
        </svg>
        <Fit w={157} className="mt-[21px] text-[52px] text-[#3a78bd]">加自选</Fit>
      </div>
    </div>
    <div className="ml-[395px] h-[15px] w-[465px] rounded-full bg-[#8e8e8e]" />
  </div>
);

export default function App() {
  return (
    <div className="flex h-[2760px] w-[1256px] flex-col overflow-hidden bg-[#1c1c1c] font-['Inter','Noto_Sans_CJK_SC',sans-serif] [font-feature-settings:'calt'_0,'liga'_0]">
      <StatusBar />
      <TitleBar />
      <Quote />
      <HotFund />
      <Tabs />
      <div className="relative h-[1470px] overflow-hidden bg-[#0d0d0d]">
        <Averages />
        <div className="flex pl-[12px]">
          <div>
            <PriceChart />
            <Indicators />
          </div>
          <ChipPanel />
        </div>
        <ChartControls />
        <Marker />
      </div>
      <BottomBar />
    </div>
  );
}
